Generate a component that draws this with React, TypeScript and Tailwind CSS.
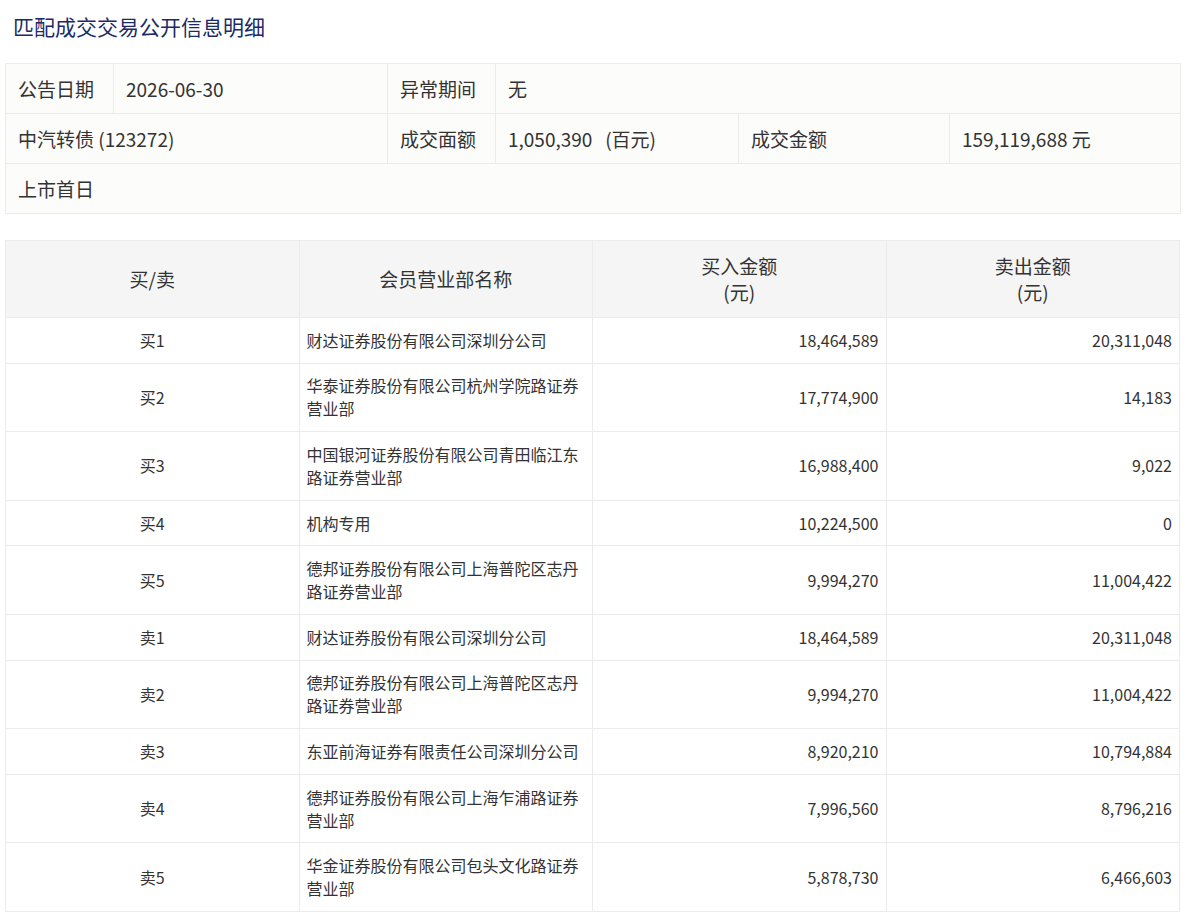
import React from 'react';

interface TradeRow {
  side: string;
  branch: string;
  buy: string;
  sell: string;
}

const rows: TradeRow[] = [
  { side: '买1', branch: '财达证券股份有限公司深圳分公司', buy: '18,464,589', sell: '20,311,048' },
  { side: '买2', branch: '华泰证券股份有限公司杭州学院路证券营业部', buy: '17,774,900', sell: '14,183' },
  { side: '买3', branch: '中国银河证券股份有限公司青田临江东路证券营业部', buy: '16,988,400', sell: '9,022' },
  { side: '买4', branch: '机构专用', buy: '10,224,500', sell: '0' },
  { side: '买5', branch: '德邦证券股份有限公司上海普陀区志丹路证券营业部', buy: '9,994,270', sell: '11,004,422' },
  { side: '卖1', branch: '财达证券股份有限公司深圳分公司', buy: '18,464,589', sell: '20,311,048' },
  { side: '卖2', branch: '德邦证券股份有限公司上海普陀区志丹路证券营业部', buy: '9,994,270', sell: '11,004,422' },
  { side: '卖3', branch: '东亚前海证券有限责任公司深圳分公司', buy: '8,920,210', sell: '10,794,884' },
  { side: '卖4', branch: '德邦证券股份有限公司上海乍浦路证券营业部', buy: '7,996,560', sell: '8,796,216' },
  { side: '卖5', branch: '华金证券股份有限公司包头文化路证券营业部', buy: '5,878,730', sell: '6,466,603' },
];

const font = "font-['Noto_Sans_CJK_SC','Noto_Sans',sans-serif]";

export default function App() {
  const infoCell = 'border border-[#ebebeb] px-[12px] h-[50px] text-[19px] leading-[26px] text-[#333]';
  const headCell = 'w-1/4 border border-[#ebebeb] py-[12px] text-[19px] leading-[26px] font-normal text-[#333]';
  const bodyCell = 'border border-[#ebebeb] py-[10.8px]';

  return (
    <div className={`${font} bg-white px-[5px] pb-4 min-h-screen`}>
      <h2 className="px-[8px] pt-[11px] pb-[22px] text-[21px] leading-[30px] text-[#1b2a68]">
        匹配成交交易公开信息明细
      </h2>

      {/* summary */}
      <table className="w-full table-fixed border-collapse bg-[#fcfcfa]">
        <colgroup>
          <col className="w-[108px]" />
          <col className="w-[274px]" />
          <col className="w-[108px]" />
          <col className="w-[243px]" />
          <col className="w-[211px]" />
          <col className="w-[231px]" />
        </colgroup>
        <tbody>
          <tr>
            <td className={infoCell}>公告日期</td>
            <td className={infoCell}>2026-06-30</td>
            <td className={infoCell}>异常期间</td>
            <td className={infoCell} colSpan={3}>
              无
            </td>
          </tr>
          <tr>
            <td className={infoCell} colSpan={2}>
              中汽转债 (123272)
            </td>
            <td className={infoCell}>成交面额</td>
            <td className={infoCell}>1,050,390 &nbsp;&nbsp;(百元)</td>
            <td className={infoCell}>成交金额</td>
            <td className={infoCell}>159,119,688 元</td>
          </tr>
          <tr>
            <td className={infoCell} colSpan={6}>
              上市首日
            </td>
          </tr>
        </tbody>
      </table>

      {/* detail */}
      <table className="mt-[26px] w-full table-fixed border-collapse">
        <thead className="bg-[#f5f5f5]">
          <tr>
            <th className={headCell}>买/卖</th>
            <th className={headCell}>会员营业部名称</th>
            <th className={headCell}>
              买入金额
              <br />
              (元)
            </th>
            <th className={headCell}>
              卖出金额
              <br />
              (元)
            </th>
          </tr>
        </thead>
        <tbody className="text-[16px] leading-[23px] text-[#333]">
          {rows.map((row) => (
            <tr key={row.side}>
              <td className={`${bodyCell} text-center`}>{row.side}</td>
              <td className={`${bodyCell} pl-[7px] pr-[10px]`}>{row.branch}</td>
              <td className={`${bodyCell} pr-[7px] text-right`}>{row.buy}</td>
              <td className={`${bodyCell} pr-[7px] text-right`}>{row.sell}</td>
            </tr>
          ))}
        </tbody>
      </table>
    </div>
  );
}
